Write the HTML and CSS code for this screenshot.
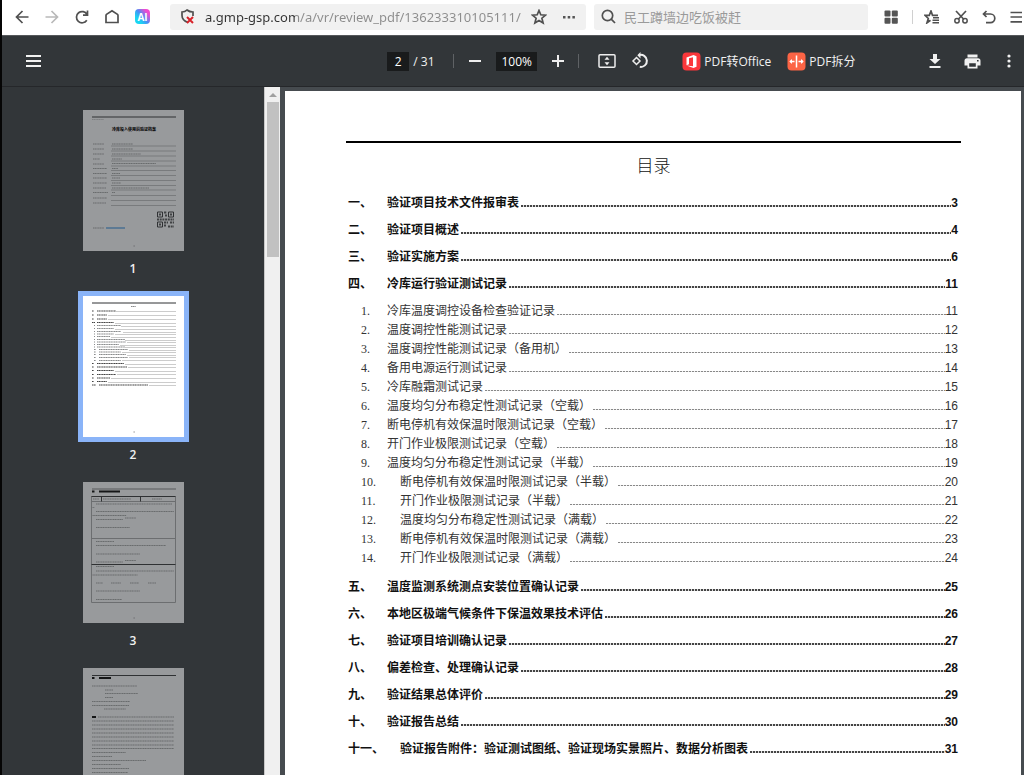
FILE: index.html
```html
<!DOCTYPE html>
<html lang="zh-CN">
<head>
<meta charset="utf-8">
<title>PDF</title>
<link rel="stylesheet" href="styles.css">
</head>
<body>
<div class="window">
  <header class="browser-bar">
    <nav class="nav-buttons">
      <button class="icon-btn" aria-label="后退"><svg width="14" height="16" viewBox="0 0 14 16"><path d="M13.500 8H1.500M7.500 2L1.500 8l6 6" class="line"/></svg></button>
      <button class="icon-btn faded" aria-label="前进"><svg width="14" height="16" viewBox="0 0 14 16"><path d="M.5 8h12M6.500 2l6 6-6 6" class="line"/></svg></button>
      <button class="icon-btn" aria-label="刷新"><svg width="14" height="16" viewBox="0 0 14 16"><path d="M11.800 11.200A5.600 5.600 0 1 1 12 5.500M12.500 1.500v4.700H8" class="line"/></svg></button>
      <button class="icon-btn" aria-label="主页"><svg width="14" height="16" viewBox="0 0 14 16"><path d="M1 6.500Q1 5.800 1.500 5.400L7 1.700l5.500 3.700q.5.400.5 1.100V13.500H1z" class="line"/></svg></button>
      <button class="ai-btn" aria-label="AI">AI</button>
    </nav>
    <div class="address">
      <svg class="shield" width="16" height="16" viewBox="0 0 16 16"><path d="M8 13.500C4 12 2 10 2 6.500V3Q5 3 7 1q2.500 2 6 2v4" class="line"/><path d="M7 8l6 6M13 8l-6 6" stroke="#d8232a" stroke-width="2" fill="none"/></svg>
      <input class="url" type="text" aria-label="网址" value="a.gmp-gsp.com/a/vr/review_pdf/136233310105111/">
      <button class="icon-btn" aria-label="收藏"><svg width="16" height="16" viewBox="0 0 16 16"><path d="M8 1.500l1.800 4.300 4.700.4-3.600 3 1.200 4.800L8 11.500 3.900 14l1.200-4.800-3.600-3 4.700-.4z" class="line"/></svg></button>
      <button class="icon-btn" aria-label="更多"><svg width="14" height="4" viewBox="0 0 14 4" fill="#555"><rect x="1" y="1" width="2.500" height="2.500"/><rect x="5.700" y="1" width="2.500" height="2.500"/><rect x="10.400" y="1" width="2.500" height="2.500"/></svg></button>
    </div>
    <label class="search">
      <svg width="15" height="15" viewBox="0 0 15 15"><circle cx="6.500" cy="6.500" r="5.200" class="line"/><path d="M10.200 10.200L14 14" class="line"/></svg>
      <input type="text" aria-label="搜索" placeholder="民工蹲墙边吃饭被赶">
    </label>
    <div class="browser-tools">
      <button class="icon-btn" aria-label="应用"><svg width="14" height="14" viewBox="0 0 14 14" fill="#555"><rect x="0.500" y="0.500" width="6" height="6" rx="1"/><rect x="7.800" y="0.500" width="6" height="6" rx="1"/><rect x="0.500" y="7.800" width="6" height="6" rx="1"/><rect x="7.800" y="7.800" width="6" height="6" rx="1"/></svg></button>
      <span class="bar-divider"></span>
      <button class="icon-btn" aria-label="收藏夹"><svg width="16" height="14" viewBox="0 0 16 14"><path d="M6.500 10.200L3 12.800l1.300-4.300L1 5.300h4.300L7 1l1.500 4.300h5.500" class="line"/><path d="M9 7.800h6M8.500 10.300H15M8.500 12.800H15" class="line thin"/></svg></button>
      <button class="icon-btn" aria-label="截图"><svg width="14" height="14" viewBox="0 0 14 14"><path d="M2 1l8 8.500M12 1L4 9.500" class="line"/><circle cx="3" cy="10.800" r="2.200" class="line thin"/><circle cx="11" cy="10.800" r="2.200" class="line thin"/></svg></button>
      <button class="icon-btn" aria-label="撤销"><svg width="14" height="14" viewBox="0 0 14 14"><path d="M4.500 1L1.500 4l3 3M1.500 4H8.500a4.300 4.300 0 0 1 0 8.600H4" class="line"/></svg></button>
      <button class="icon-btn" aria-label="菜单"><svg width="12" height="14" viewBox="0 0 12 14"><path d="M.5 2.500H12M.5 7H12M.5 11.800H12" class="line"/></svg></button>
    </div>
  </header>

  <div class="pdf-bar">
    <div class="pdf-left">
      <button class="icon-btn" aria-label="侧边栏"><svg width="16" height="12" viewBox="0 0 16 12" fill="#f1f1f1"><path d="M0 0h15v2H0zM0 5h15v2H0zM0 10h15v2H0z"/></svg></button>
    </div>
    <div class="pdf-center">
      <input class="num page-num" type="text" aria-label="页码" value="2">
      <span class="total">/ 31</span>
      <span class="divider"></span>
      <button class="icon-btn" aria-label="缩小"><svg width="14" height="14" viewBox="0 0 14 14"><path d="M1 7h12" class="light"/></svg></button>
      <input class="num zoom-num" type="text" aria-label="缩放" value="100%">
      <button class="icon-btn" aria-label="放大"><svg width="14" height="14" viewBox="0 0 14 14"><path d="M1 7h12M7 1v12" class="light"/></svg></button>
      <span class="divider"></span>
      <button class="icon-btn fit" aria-label="适合页面"><svg width="18" height="16" viewBox="0 0 18 16"><rect x="1" y="1.800" width="16" height="12.400" rx="1" class="light thin"/><path d="M9 3.800L6.500 6.800h5zM9 12.200L6.500 9.200h5z" fill="#eee"/></svg></button>
      <button class="icon-btn rotate" aria-label="旋转"><svg width="18" height="18" viewBox="0 0 18 18"><path d="M5.500 5.500L9 9l-3.500 3.500L2 9z" class="light thin"/><path d="M8 3.200a6 6 0 1 1 .8 11.600" class="light"/><path d="M9.500 0v6.400L6.300 3.200z" fill="#eee"/></svg></button>
      <button class="tool office"><svg width="19" height="19" viewBox="0 0 19 19"><rect x=".5" y=".5" width="18" height="18" rx="4" fill="#fb373b"/><path d="M4.500 5.500L11.500 3l3 1.200v10.600l-3 1.200-7-2.500 6.500.7V5.300L7 6.300v6l-2.500 1z" fill="#fff"/></svg>PDF转Office</button>
      <button class="tool"><svg width="19" height="19" viewBox="0 0 19 19"><rect x=".5" y=".5" width="18" height="18" rx="4" fill="#fc6445"/><path d="M9.500 3.500v12M3 9.500h4.500M11.500 9.500H16" stroke="#fff" stroke-width="1.500"/><path d="M5 7v5L2.300 9.500zM14 7v5l2.700-2.500z" fill="#fff"/></svg>PDF拆分</button>
    </div>
    <div class="pdf-right">
      <button class="icon-btn" aria-label="下载"><svg width="12" height="14" viewBox="0 0 12 14" fill="#f1f1f1"><path d="M4 0h4v5h3.500L6 10 .5 5H4zM.5 12h11v2H.5z"/></svg></button>
      <button class="icon-btn" aria-label="打印"><svg width="17" height="15" viewBox="0 0 17 15" fill="#f1f1f1"><path d="M3.500.5h10v3h-10z"/><path fill-rule="evenodd" d="M3 4.300h11q2.500 0 2.500 2.500V11.500h-3V14.500h-10V11.500h-3V6.800Q.5 4.300 3 4.300zM5.200 9.300v3.500h6.600V9.300zM13 6v1.600h1.600V6z"/></svg></button>
      <button class="icon-btn" aria-label="更多操作"><svg width="4" height="14" viewBox="0 0 4 14" fill="#f1f1f1"><circle cx="2" cy="2" r="1.600"/><circle cx="2" cy="7" r="1.600"/><circle cx="2" cy="12" r="1.600"/></svg></button>
    </div>
  </div>

  <div class="workspace">
    <aside class="thumbs">
      <button class="thumb">
        <svg width="101" height="141" viewBox="0 0 101 141">
          <path d="M9 7h84" class="ink-line"/><path d="M9 9.500h12" class="ink faint"/>
          <text x="51" y="20.500" text-anchor="middle" class="cover-title">冷库投入使用前验证档案</text>
          <path d="M10 34h11M10 39h11M10 44h11M10 49h7M10 54h11M10 58.500h14M10 63.500h14M10 68h14M10 73h14M10 78h13M10 82.500h15M10 88h14M10 93h13M29 34h21M29 39h21M29 44h29M29 49h10M29 53.500h44M29 58.500h6M29 63.500h8M29 68h8M29 73h9M29 78h37M29 82.500h3M10 118h11" class="ink"/>
          <path d="M28 36h65M28 41h65M28 46h65M28 51h65M28 56h65M28 60.500h65M28 65.500h65M28 70.500h65M28 75.500h65M28 80h65M28 85.500h65M28 90.500h65M28 95.500h65" class="rule"/>
          <path d="M23 118h19" stroke="#225a8c"/>
          <path d="M74.500 102h5v5h-5zM85.500 102h5v5h-5zM74.500 112h5v5h-5z" fill="none" stroke="#303234" stroke-width="1"/>
          <path d="M76 104.500h2M87 104.500h2M76 114.500h2M81 102.500h3M74 109.500h17M82 105.500h2M81 112.500h4M87 112.500h4M81 115.500h2M85 116.500h6" stroke="#404244" stroke-width="2" stroke-dasharray="2 .7"/>
          <path d="M50.500 136h1.500" class="ink"/>
        </svg>
        <span>1</span>
      </button>
      <button class="thumb selected" aria-current="page">
        <svg width="101" height="141" viewBox="0 0 101 141">
          <path d="M9 7h84" class="ink-line"/><path d="M48 10.500h5" class="ink"/>
          <path d="M9 15h2M14 15h19M9 19h2M14 19h10M9 23h2M14 23h10M9 26.500h3M14 26.500h17M9 67.500h2M14 67.500h27M9 71h2M14 71h30M9 74.500h2M14 74.500h17M9 78.500h2M14 78.500h19M9 82h2M14 82h13M9 85.500h2M14 85.500h10M9 89h4M16 89h49" class="ink strong"/>
          <path d="M11 29.500h1M14 29.500h24M11 32.500h1M14 32.500h17M11 35.500h1M14 35.500h24M11 38h1M14 38h17M11 40.500h1M14 40.500h13M11 43.500h1M14 43.500h28M11 46h1M14 46h29M11 48.500h1M14 48.500h22M11 51h1M14 51h28M11 53.500h2M16 53.500h29M11 56h2M16 56h22M11 58.500h2M16 58.500h27M11 61.500h2M16 61.500h29M11 64.500h2M16 64.500h22" class="ink"/>
          <path d="M33 15.500h60M25 19.500h68M25 23.500h68M32 27.500h61M38 30.500h55M32 33.500h61M40 36.500h53M32 38.500h61M28 41.500h65M42 44.500h51M44 46.500h49M37 49.500h56M42 51.500h51M46 54.500h47M39 56.500h54M44 59.500h49M46 61.500h47M39 64.500h54M42 68.500h51M45 71.500h48M32 75.500h61M34 78.500h59M28 82.500h65M25 86.500h68M66 89.500h27" class="dots"/>
          <path d="M50.500 136h1.500" class="ink"/>
        </svg>
        <span>2</span>
      </button>
      <button class="thumb">
        <svg width="101" height="141" viewBox="0 0 101 141">
          <path d="M9 7h84" class="rule heavy"/><path d="M9 9.500h2.500M16 9.500h21" stroke="#151617" stroke-width="2"/>
          <path d="M8.500 14.500h84v106h-84zM8.500 19.500h84M8.500 56.500h84" class="rule frame"/><path d="M8.500 14.500h84M18.500 14.500v5M57.500 14.500v5M8.500 82.500h84" class="ink-line"/>
          <path d="M10 17h6M20 17h28M69 17h10M13 22h76M9.500 25.500h2M13 29.500h78M9.500 33.500h34M13 37.500h27M42 36h11M13 45.500h34M13 59.500h18M13 63.500h70M13 72h44M13 80h27M42 78.500h11M13 84.500h18M13 89h78M9.500 93h45M13 101h7M28 101h10M47 101h9M65 101h8M13 109h44M13 117.500h26" class="ink"/>
          <path d="M50.500 136h1.500" class="ink"/>
        </svg>
        <span>3</span>
      </button>
      <button class="thumb" aria-label="第四页">
        <svg width="101" height="141" viewBox="0 0 101 141">
          <path d="M9 7.500h84" class="ink-line"/><path d="M9 10h2.500M16 10h12M9 49h4" stroke="#151617" stroke-width="2"/>
          <path d="M9 18h45M22 22h8M22 25.500h33M22 29.500h8M9 33.500h38M9 37.500h37M21 41h22M15 49h76M9 53h82M9 57h82M9 61h82M9 65h82M9 69h82M9 73h82M9 77h82M9 80.500h82M9 84.500h34M9 88.500h20M9 92.500h54M9 96.500h29M9 100.500h37M9 104.500h36M9 108.500h82" class="ink"/>
        </svg>
      </button>
    </aside>
    <div class="scrollbar"><span class="arrow"></span><span class="handle"></span></div>
    <main class="viewer">
      <article class="page">
        <h1>目录</h1>
        <ol class="toc">
          <li><a href="#p3"><b>一、</b><span>验证项目技术文件报审表</span><i></i><em>3</em></a></li>
          <li><a href="#p4"><b>二、</b><span>验证项目概述</span><i></i><em>4</em></a></li>
          <li><a href="#p6"><b>三、</b><span>验证实施方案</span><i></i><em>6</em></a></li>
          <li><a href="#p11"><b>四、</b><span>冷库运行验证测试记录</span><i></i><em>11</em></a>
            <ol class="sub">
              <li><a href="#p11"><b>1.</b><span>冷库温度调控设备检查验证记录</span><i></i><em>11</em></a></li>
              <li><a href="#p12"><b>2.</b><span>温度调控性能测试记录</span><i></i><em>12</em></a></li>
              <li><a href="#p13"><b>3.</b><span>温度调控性能测试记录（备用机）</span><i></i><em>13</em></a></li>
              <li><a href="#p14"><b>4.</b><span>备用电源运行测试记录</span><i></i><em>14</em></a></li>
              <li><a href="#p15"><b>5.</b><span>冷库融霜测试记录</span><i></i><em>15</em></a></li>
              <li><a href="#p16"><b>6.</b><span>温度均匀分布稳定性测试记录（空载）</span><i></i><em>16</em></a></li>
              <li><a href="#p17"><b>7.</b><span>断电停机有效保温时限测试记录（空载）</span><i></i><em>17</em></a></li>
              <li><a href="#p18"><b>8.</b><span>开门作业极限测试记录（空载）</span><i></i><em>18</em></a></li>
              <li><a href="#p19"><b>9.</b><span>温度均匀分布稳定性测试记录（半载）</span><i></i><em>19</em></a></li>
              <li class="wide"><a href="#p20"><b>10.</b><span>断电停机有效保温时限测试记录（半载）</span><i></i><em>20</em></a></li>
              <li class="wide"><a href="#p21"><b>11.</b><span>开门作业极限测试记录（半载）</span><i></i><em>21</em></a></li>
              <li class="wide"><a href="#p22"><b>12.</b><span>温度均匀分布稳定性测试记录（满载）</span><i></i><em>22</em></a></li>
              <li class="wide"><a href="#p23"><b>13.</b><span>断电停机有效保温时限测试记录（满载）</span><i></i><em>23</em></a></li>
              <li class="wide"><a href="#p24"><b>14.</b><span>开门作业极限测试记录（满载）</span><i></i><em>24</em></a></li>
            </ol>
          </li>
          <li><a href="#p25"><b>五、</b><span>温度监测系统测点安装位置确认记录</span><i></i><em>25</em></a></li>
          <li><a href="#p26"><b>六、</b><span>本地区极端气候条件下保温效果技术评估</span><i></i><em>26</em></a></li>
          <li><a href="#p27"><b>七、</b><span>验证项目培训确认记录</span><i></i><em>27</em></a></li>
          <li><a href="#p28"><b>八、</b><span>偏差检查、处理确认记录</span><i></i><em>28</em></a></li>
          <li><a href="#p29"><b>九、</b><span>验证结果总体评价</span><i></i><em>29</em></a></li>
          <li><a href="#p30"><b>十、</b><span>验证报告总结</span><i></i><em>30</em></a></li>
          <li class="wide"><a href="#p31"><b>十一、</b><span>验证报告附件：验证测试图纸、验证现场实景照片、数据分析图表</span><i></i><em>31</em></a></li>
        </ol>
      </article>
    </main>
  </div>
</div>
</body>
</html>
```
FILE: styles.css
```css
* { box-sizing: border-box; }
body {
  margin: 0;
  font-family: "Open Sans", "Noto Sans CJK SC", sans-serif;
}
button, input { font: inherit; border: 0; padding: 0; background: none; outline: 0; }
button { display: flex; align-items: center; }
svg { display: block; flex: none; }
.line { fill: none; stroke: #505050; stroke-width: 1.7; }
.light { fill: none; stroke: #eee; stroke-width: 2; }
.line.thin, .light.thin { stroke-width: 1.5; }
.faded { opacity: .4; }

.window {
  display: flex;
  flex-direction: column;
  height: 100vh;
  overflow: hidden;
  border-left: 2px solid #050505;
  background: #323639;
}

/* Browser chrome */
.browser-bar {
  display: flex;
  align-items: center;
  flex: none;
  height: 35px;
  padding-bottom: 2px;
  background: #fff;
}
.nav-buttons { display: flex; align-items: center; gap: 16px; padding: 0 20px 0 13px; }
.ai-btn {
  justify-content: center;
  width: 15px;
  height: 15px;
  border-radius: 4px;
  background: linear-gradient(50deg, #19d5f2 25%, #4a8df5 50%, #f04ad0 80%);
  color: #fff;
  font-size: 10px;
  font-weight: 700;
}
.address, .search {
  display: flex;
  align-items: center;
  height: 26px;
  border-radius: 3px;
  background: #f1f1f1;
}
.address { flex: 417; min-width: 0; padding: 0 10px 0 10px; }
.url {
  flex: 1;
  min-width: 0;
  margin: 0 8px 0 9px;
  text-indent: -5px;
  font-family: "Noto Sans", sans-serif;
  font-size: 13px;
  color: transparent;
  background: linear-gradient(90deg, #333 90px, #8c8c8c 90px);
  background-clip: text;
  -webkit-background-clip: text;
}
.address .icon-btn + .icon-btn { margin-left: 15px; }
.search { flex: 274; min-width: 0; margin-left: 8px; padding: 0 7px; gap: 8px; }
.search input { flex: 1; min-width: 0; font-size: 13px; }
.search input::placeholder { color: #9a9a9a; opacity: 1; }
.browser-tools { display: flex; align-items: center; gap: 14px; padding: 0 2px 0 16px; }
.bar-divider { width: 1px; height: 14px; margin-right: -3px; background: #d0d0d0; }

/* PDF toolbar */
.pdf-bar {
  display: grid;
  grid-template-columns: 16fr auto 7fr;
  align-items: center;
  flex: none;
  height: 52px;
  border-top: 1px solid #55585b;
  border-bottom: 1px solid #25272a;
  color: #f1f1f1;
  font-size: 12px;
}
.pdf-left { padding-left: 24px; }
.pdf-center { display: flex; align-items: center; white-space: nowrap; }
.num { height: 19px; background: #191b1c; color: #fff; text-align: center; }
.page-num { width: 22px; }
.zoom-num { width: 41px; margin: 0 14px; }
.total { width: 40px; padding-left: 4px; }
.divider { width: 1px; height: 14px; margin: 0 14px 0 4px; background: #5f6265; }
.icon-btn + .divider { margin: 0 19px 0 13px; }
.rotate { margin: 0 33px 0 15px; }
.tool { gap: 3px; color: #f1f1f1; }
.office { margin-right: 16px; }
.pdf-right { display: flex; align-items: center; justify-content: flex-end; gap: 23px; padding-right: 13px; }
.pdf-right .icon-btn:last-child { margin-left: 3px; }

/* Thumbnails and document */
.workspace {
  display: grid;
  grid-template-columns: 262px 16px 1fr;
  flex: 1;
  min-height: 0;
}
.thumbs {
  display: flex;
  flex-direction: column;
  align-items: center;
  gap: 4px;
  padding-top: 18px;
  overflow: hidden;
}
.thumb { flex-direction: column; flex: none; gap: 3px; color: #f1f1f1; font-size: 12px; font-weight: 600; }
.thumb span { height: 28px; line-height: 20px; }
.thumb svg { box-sizing: content-box; border: 5px solid #323639; background: #989a9c; }
.thumb.selected svg { border-color: #8ab4f8; background: #fff; }
.thumb path { fill: none; }
.thumb .ink-line { stroke: #2f3133; stroke-width: 1; }
.thumb .ink { stroke: #55585a; stroke-width: 1.200; stroke-dasharray: 1.300 .400; opacity: .7; }
.thumb .ink.strong { stroke: #222; opacity: .85; }
.thumb .faint { opacity: .4; }
.thumb .rule { stroke: #6c6e70; stroke-width: .7; }
.thumb .heavy { stroke-width: 1.500; }
.thumb .frame { stroke-width: 1; }
.thumb .dots { stroke: #aaa; stroke-width: .6; }
.cover-title { font-size: 4px; font-weight: 900; fill: #111; }

.scrollbar {
  display: flex;
  flex-direction: column;
  align-items: center;
  background: #f0f0f0;
  border-left: 1px solid #c8c8c8;
}
.arrow { margin: 6px 0 5px; border: 4px solid transparent; border-top: 0; border-bottom-color: #a0a0a0; }
.handle { width: 12px; height: 155px; background: #c1c1c1; }

.viewer { padding: 4px 3px 0 5px; background: #464b4f; overflow: hidden; }
.page {
  min-height: 1040px;
  padding: 50px 60px 50px 61px;
  background: #fff;
  color: #111;
  font-family: "Liberation Sans", "Noto Sans CJK SC", sans-serif;
}
.page h1 {
  margin: 0;
  padding-top: 11px;
  border-top: 2px solid #000;
  font-size: 17px;
  line-height: 26px;
  font-weight: 300;
  text-align: center;
}
.toc {
  margin: 0;
  padding: 10px 3px 0 2px;
  list-style: none;
  font-size: 12px;
  line-height: 27px;
  font-weight: 700;
}
.toc a { display: flex; color: inherit; text-decoration: none; white-space: nowrap; }
.toc b { width: 39px; font-weight: inherit; }
.toc .wide > a > b { width: 52px; }
.toc em { font-style: normal; }
.toc i {
  flex: 1;
  margin-left: 2px;
  background: linear-gradient(90deg, #444 2px, #ddd 2px) 0 15px / 3px 2px repeat-x;
}
.sub {
  margin: 0;
  padding: 4px 0 6px;
  list-style: none;
  line-height: 19px;
  font-weight: 400;
  color: #333;
}
.sub b { width: 39px; padding-left: 13px; font-family: "Liberation Serif", serif; }
.toc .sub i { background: linear-gradient(90deg, #888 2px, #eee 2px) 0 12px / 3px 1px repeat-x; }
```
